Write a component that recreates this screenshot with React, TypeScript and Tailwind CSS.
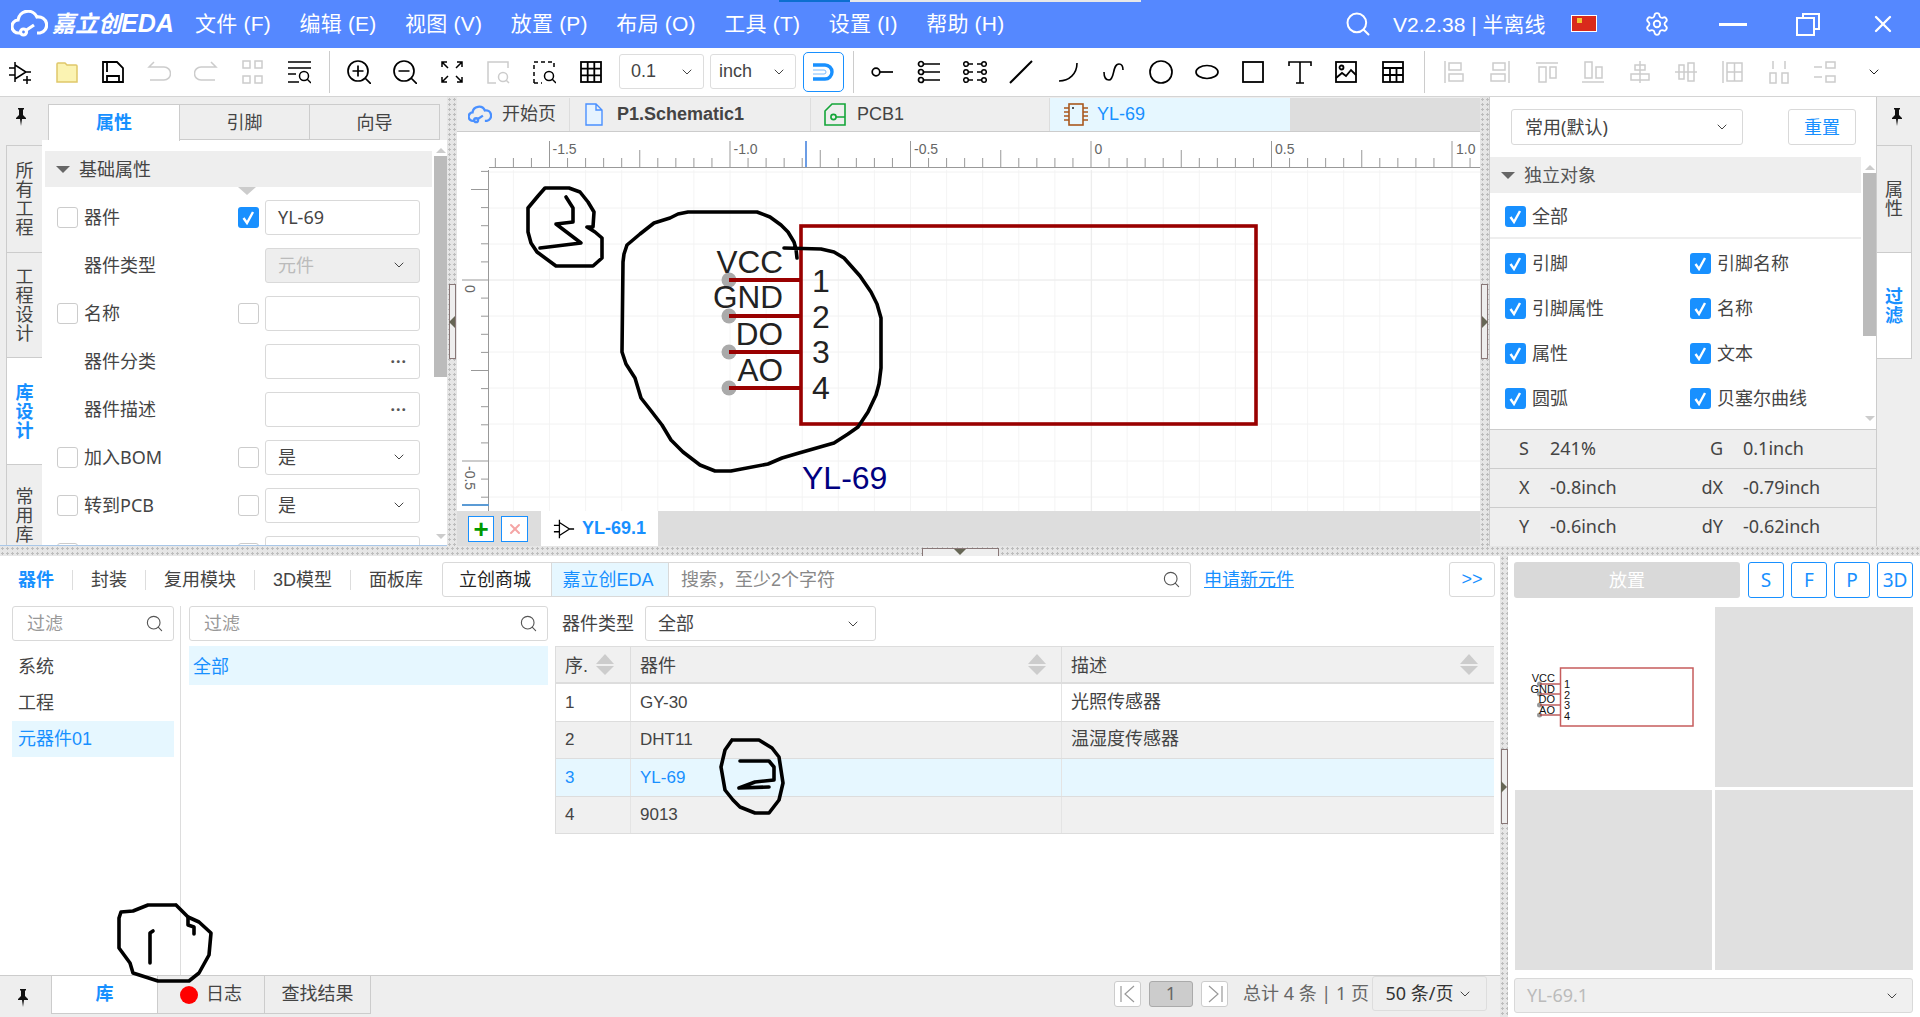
import { ChevronDown, Search, Settings, X } from "lucide-react";
import type { ReactNode } from "react";

const noto = "font-['Noto_Sans','Noto_Sans_CJK_SC',sans-serif]";
const gutter =
  "bg-[#e6e6e6] bg-[radial-gradient(circle,#bdbdbd_1px,transparent_1.2px)] bg-size-[5px_5px]";

function Ico({ children, size = 24, color = "#000", sw = 1.5 }: { children: ReactNode; size?: number; color?: string; sw?: number }) {
  return (
    <svg width={size} height={size} viewBox="0 0 24 24" fill="none" stroke={color} strokeWidth={sw}>
      {children}
    </svg>
  );
}

function Pin() {
  return (
    <svg width="12" height="20" viewBox="0 0 12 20">
      <path d="M3 1h6v1L8 3v5l3 3v1H7l-1 7-1-7H1v-1l3-3V3L3 2z" fill="#111" />
    </svg>
  );
}

function Check({ on }: { on?: boolean }) {
  if (on) {
    return (
      <span className="flex h-[21px] w-[21px] shrink-0 items-center justify-center rounded-[3px] bg-[#1890ff]">
        <svg width="15" height="15" viewBox="0 0 15 15" fill="none" stroke="#fff" strokeWidth="2.4">
          <path d="M2.5 8l3.5 5L12 2" />
        </svg>
      </span>
    );
  }
  return <span className="h-[21px] w-[21px] shrink-0 rounded-[3px] border border-[#ccc] bg-white" />;
}

function Chev({ color = "#444" }: { color?: string }) {
  return <ChevronDown size={16} strokeWidth={1.5} color={color} />;
}

function Tri({ className }: { className: string }) {
  return <span className={`block h-0 w-0 ${className}`} />;
}

const toolLeft: ReactNode[] = [
  <Ico><path d="M7 2v20M7 5l11 7-11 7M1 8h6M1 15h6M18 12h5M15 20h8M19 16v8" /></Ico>,
  <Ico color="#e0c76a"><path d="M2 4a1 1 0 011-1h7l2 2h9a1 1 0 011 1v16H2z" fill="#fbf3b2" /></Ico>,
  <Ico sw={1.8}><path d="M2 2h14l6 6v14H2zM6 2v10M6 22v-6h12v6" /></Ico>,
  <Ico color="#ccc"><path d="M7 2L2 7l5 0M2 7h15a5 5 0 010 13H3" /></Ico>,
  <Ico color="#ccc"><path d="M17 2l5 5-5 0M22 7H7a5 5 0 000 13h14" /></Ico>,
  <Ico color="#ccc"><rect x="3" y="1" width="7" height="7" /><rect x="15" y="1" width="7" height="7" /><rect x="3" y="16" width="7" height="7" /><rect x="15" y="16" width="7" height="7" /></Ico>,
  <Ico><path d="M1 2h23M1 8h23M1 14h8M1 22h11" /><circle cx="17" cy="16" r="4.5" /><path d="M20 19l4 4" /></Ico>,
];

const toolZoom: ReactNode[] = [
  <Ico sw={1.7}><circle cx="11" cy="11" r="10" /><path d="M5.5 11h11M11 5.5v11M18 18l6 6" /></Ico>,
  <Ico sw={1.7}><circle cx="11" cy="11" r="10" /><path d="M5.5 11h11M18 18l6 6" /></Ico>,
  <Ico sw={1.5}><path d="M2 7V2h5M2 2l6 6M22 7V2h-5M22 2l-6 6M2 17v5h5M2 22l6-6M22 17v5h-5M22 22l-6-6" /></Ico>,
  <Ico color="#ccc"><path d="M22 8V2H2v21h8" /><circle cx="17" cy="17" r="4.5" /><path d="M20 20l3 3" /></Ico>,
  <Ico><path d="M2 23V2h20v7" strokeDasharray="4 3" /><path d="M2 23h8" strokeDasharray="4 3" /><circle cx="17" cy="16" r="4.5" /><path d="M20 19l4 4" /></Ico>,
  <Ico sw={1.8}><rect x="2" y="2" width="20" height="20" /><path d="M2 8.7h20M2 15.3h20M8.7 2v20M15.3 2v20" /></Ico>,
];

const toolDraw: ReactNode[] = [
  <Ico sw={1.7}><circle cx="6" cy="12" r="3.8" /><path d="M10 12h13" /></Ico>,
  <Ico sw={1.7}><circle cx="4" cy="4" r="2.5" /><circle cx="4" cy="12" r="2.5" /><circle cx="4" cy="20" r="2.5" /><path d="M7 4h16M7 12h16M7 20h16" /></Ico>,
  <Ico sw={1.5}><circle cx="3" cy="4" r="2.3" /><circle cx="3" cy="12" r="2.3" /><circle cx="3" cy="20" r="2.3" /><circle cx="21" cy="4" r="2.3" /><circle cx="21" cy="12" r="2.3" /><circle cx="21" cy="20" r="2.3" /><path d="M5 4h5M5 12h5M5 20h5M14 4h5M14 12h5M14 20h5" /></Ico>,
  <Ico sw={2}><path d="M1 23L23 1" /></Ico>,
  <Ico sw={1.6}><path d="M3 21c10 0 18-7 18-18" /></Ico>,
  <Ico sw={1.6}><path d="M2 12c0 5 2 8 5 8 6 0 3-16 10-16 3 0 4 3 4 6" /></Ico>,
  <Ico sw={1.7}><circle cx="12" cy="12" r="11" /></Ico>,
  <Ico sw={1.7}><ellipse cx="12" cy="12" rx="11" ry="6.5" /></Ico>,
  <Ico sw={1.8}><rect x="2" y="2" width="20" height="20" /></Ico>,
  <Ico sw={1.6}><path d="M1 6V2h22v4M12 2v21M8 23h8" /></Ico>,
  <Ico sw={1.8}><rect x="2" y="2" width="20" height="20" /><circle cx="7.5" cy="7.5" r="2" /><path d="M2 18l6-5 4 3 5-6 5 5" /></Ico>,
  <Ico sw={1.8}><rect x="2" y="2" width="20" height="20" /><path d="M2 8h20M2 15h20M9 8v14M15.5 8v14" /></Ico>,
];

const toolAlign: ReactNode[] = [
  <><path d="M3 1v22" /><rect x="7" y="3" width="12" height="7" /><rect x="7" y="14" width="14" height="7" /></>,
  <><path d="M21 1v22" /><rect x="5" y="3" width="12" height="7" /><rect x="3" y="14" width="14" height="7" /></>,
  <><path d="M1 3h22" /><rect x="4" y="7" width="7" height="15" /><rect x="15" y="7" width="6" height="11" /></>,
  <><path d="M1 22h22" /><rect x="4" y="2" width="7" height="16" /><rect x="15" y="7" width="6" height="11" /></>,
  <><path d="M12 1v22" /><rect x="7" y="5" width="10" height="5" /><rect x="3" y="14" width="18" height="6" /></>,
  <><path d="M1 12h22" /><rect x="5" y="5" width="5" height="14" /><rect x="14" y="3" width="6" height="18" /></>,
  <><path d="M3 1v22" /><rect x="7" y="3" width="15" height="18" /><path d="M14.5 3v18M7 12h15" /></>,
  <><path d="M6 1v8M18 1v8" /><rect x="3" y="13" width="6" height="10" /><rect x="15" y="13" width="6" height="10" /></>,
  <><path d="M1 7h8M1 17h8" /><rect x="13" y="2" width="9" height="6" /><rect x="13" y="16" width="9" height="6" /></>,
];

function Slot({ children }: { children: ReactNode }) {
  return <div className="flex h-full w-[46.4px] shrink-0 items-center justify-center">{children}</div>;
}

function TitleBar() {
  const menus = ["文件 (F)", "编辑 (E)", "视图 (V)", "放置 (P)", "布局 (O)", "工具 (T)", "设置 (I)", "帮助 (H)"];
  return (
    <div className="relative flex h-12 shrink-0 items-center bg-[#5588ff] text-white">
      <div className="absolute left-[779px] top-0 h-[2px] w-[71px] bg-[#0c6fd0]" />
      <div className="absolute left-[850px] top-0 h-[2px] w-[291px] bg-[#e8e8e8]" />
      <svg className="ml-[11px] shrink-0" width="37" height="28" viewBox="0 0 37 28" fill="none" stroke="#fff" strokeWidth="3.2">
        <path d="M10 23H8a6.5 6.5 0 01-1-13A10 10 0 0126 7a8 8 0 013 16h-3M14 21l9-6" />
        <circle cx="12.5" cy="22" r="3" />
      </svg>
      <span className="ml-[4px] w-[122px] whitespace-nowrap text-[23px] font-bold italic">
        嘉立创<span className="text-[25px]">EDA</span>
      </span>
      <div className="ml-[21px] flex gap-[28.6px] text-[21px] tracking-[0.2px]">
        {menus.map((m) => (
          <span key={m}>{m}</span>
        ))}
      </div>
      <div className="absolute left-[1344px] top-[10px]">
        <Search size={28} strokeWidth={1.7} />
      </div>
      <span className="absolute left-[1393px] top-[9px] text-[21px]">V2.2.38 | 半离线</span>
      <div className="absolute left-[1571px] top-[15px] h-[17px] w-[26px] border border-white bg-[#d92a1c]">
        <span className="absolute left-[5px] top-[2px] h-[5px] w-[5px] bg-[#f3c533]" />
      </div>
      <div className="absolute left-[1644px] top-[11px]">
        <Settings size={26} strokeWidth={1.7} />
      </div>
      <div className="absolute left-[1719px] top-[23px] h-[3px] w-[28px] bg-white" />
      <svg className="absolute left-[1795px] top-[12px]" width="26" height="24" viewBox="0 0 26 24" fill="none" stroke="#fff" strokeWidth="2">
        <path d="M8 6V2h16v15h-5" />
        <rect x="2" y="6" width="17" height="17" />
      </svg>
      <div className="absolute left-[1869px] top-[10px]">
        <X size={28} strokeWidth={2} />
      </div>
    </div>
  );
}

function Toolbar() {
  return (
    <div className="flex h-[49px] shrink-0 items-center border-b border-[#d4d4d4] bg-white pb-px text-[18px] text-[#444]">
      <div className="-ml-[3px] flex h-full">
        {toolLeft.map((t, i) => (
          <Slot key={i}>{t}</Slot>
        ))}
      </div>
      <div className="mx-[7px] h-[42px] w-px shrink-0 bg-[#ccc]" />
      <div className="-ml-px flex h-full">
        {toolZoom.map((t, i) => (
          <Slot key={i}>{t}</Slot>
        ))}
      </div>
      <div className="ml-[5px] flex h-[35px] w-[85px] shrink-0 items-center justify-between rounded-[3px] border border-[#ddd] pl-[11px] pr-[8px]">
        0.1 <Chev />
      </div>
      <div className="ml-[6px] flex h-[35px] w-[86px] shrink-0 items-center justify-between rounded-[3px] border border-[#ddd] pl-[8px] pr-[8px]">
        inch <Chev />
      </div>
      <div className="ml-[7px] flex h-[40px] w-[41px] shrink-0 items-center justify-center rounded-[5px] border border-[#1890ff]">
        <svg width="26" height="22" viewBox="0 0 26 22" fill="none" stroke="#1890ff" strokeWidth="3.4">
          <path d="M2 4h12a7 7 0 010 14H2" />
          <path d="M2 9h11a2 2 0 010 4H2" strokeWidth="1" stroke="#7dbcff" />
        </svg>
      </div>
      <div className="ml-[9px] h-[42px] w-px shrink-0 bg-[#ccc]" />
      <div className="ml-[5px] flex h-full">
        {toolDraw.map((t, i) => (
          <Slot key={i}>{t}</Slot>
        ))}
      </div>
      <div className="ml-[8px] h-[42px] w-px shrink-0 bg-[#ccc]" />
      <div className="ml-[6px] flex h-full">
        {toolAlign.map((t, i) => (
          <Slot key={i}>
            <Ico color="#ccc" sw={1.5}>{t}</Ico>
          </Slot>
        ))}
        <div className="ml-[3px] flex h-full w-[46.4px] items-center justify-center">
          <Chev color="#222" />
        </div>
      </div>
    </div>
  );
}

function RailTab({ text, h, active, side, top }: { text: string; h: number; active?: boolean; side: "l" | "r"; top?: boolean }) {
  const border = side === "l" ? "border-l ml-[6px]" : "border-r mr-[8px]";
  return (
    <div
      className={`flex justify-center overflow-hidden border-t border-[#ccc] ${top ? "items-start pt-[22px]" : "items-center"} ${border} ${active ? "bg-white font-bold text-[#1890ff]" : "text-[#444]"}`}
      style={{ height: h }}
    >
      <span className="block w-[18px] text-[18px] leading-[19px]">{text}</span>
    </div>
  );
}

function Field({ children, disabled }: { children?: ReactNode; disabled?: boolean }) {
  return (
    <div className={`flex h-[35px] w-[155px] shrink-0 items-center justify-between rounded-[3px] border border-[#d9d9d9] pl-[12px] pr-[12px] ${disabled ? "bg-[#eee]" : "bg-white"}`}>
      {children}
    </div>
  );
}

function Dots() {
  return <span className="ml-auto text-[16px] font-bold leading-none tracking-[1px] text-[#555]">···</span>;
}

function PropRow({ label, check, field }: { label: string; check?: "off" | "on"; field: ReactNode }) {
  return (
    <div className="flex h-[48px] items-center pl-[15px]">
      {check ? <Check /> : <span className="w-[21px] shrink-0" />}
      <span className="ml-[6px] w-[154px] shrink-0">{label}</span>
      {check ? <Check on={check === "on"} /> : <span className="w-[21px] shrink-0" />}
      <div className="ml-[6px]">{field}</div>
    </div>
  );
}

function ScrollBar({ top, h }: { top: number; h: number }) {
  return (
    <div className="flex w-[15px] shrink-0 flex-col items-center pl-[2px]">
      <Tri className="mt-[8px] border-x-[5px] border-b-[5px] border-x-transparent border-b-[#ccc]" />
      <div className="w-[13px] bg-[#bbb]" style={{ marginTop: top, height: h }} />
      <span className="flex-1" />
      <Tri className="mb-[6px] border-x-[5px] border-t-[5px] border-x-transparent border-t-[#ccc]" />
    </div>
  );
}

function LeftPanel() {
  return (
    <div className={`flex w-[447px] shrink-0 overflow-hidden border-b border-[#a9c7e8] bg-[#eee] text-[18px] text-[#444] ${noto}`}>
      <div className="flex w-[42px] shrink-0 flex-col">
        <div className="flex h-[48px] items-center justify-center pb-[8px]">
          <Pin />
        </div>
        <RailTab side="l" h={107} text="所有工程" />
        <RailTab side="l" h={106} text="工程设计" />
        <RailTab side="l" h={107} active text="库设计" />
        <RailTab side="l" h={81} top text="常用库" />
      </div>
      <div className="flex min-w-0 flex-1 flex-col">
        <div className="mt-[7px] flex h-[36px] w-[392px] shrink-0 border-x border-t border-[#ccc] ml-[6px] text-center leading-[34px]">
          <div className="relative -mb-px w-[131px] border-r border-[#ccc] bg-white font-bold text-[#1890ff]">属性</div>
          <div className="w-[130px] border-b border-r border-[#ccc]">引脚</div>
          <div className="flex-1 border-b border-[#ccc]">向导</div>
        </div>
        <div className="flex min-h-0 flex-1 bg-white">
          <div className="relative w-[390px] shrink-0 overflow-hidden pt-[11px]">
            <div className="ml-[3px] flex h-[36px] items-center bg-[#eee] pl-[11px]">
              <Tri className="border-x-[7px] border-t-[7px] border-x-transparent border-t-[#666]" />
              <span className="ml-[9px]">基础属性</span>
            </div>
            <Tri className="absolute left-[196px] top-[47px] border-x-[9px] border-t-[8px] border-x-transparent border-t-[#ccc]" />
            <div className="pt-[6px]">
              <PropRow label="器件" check="on" field={<Field>YL-69</Field>} />
              <PropRow label="器件类型" field={<Field disabled><span className="text-[#bbb]">元件</span><Chev /></Field>} />
              <PropRow label="名称" check="off" field={<Field />} />
              <PropRow label="器件分类" field={<Field><Dots /></Field>} />
              <PropRow label="器件描述" field={<Field><Dots /></Field>} />
              <PropRow label="加入BOM" check="off" field={<Field>是<Chev /></Field>} />
              <PropRow label="转到PCB" check="off" field={<Field>是<Chev /></Field>} />
              <PropRow label="" check="off" field={<Field />} />
            </div>
          </div>
          <ScrollBar top={3} h={221} />
        </div>
      </div>
    </div>
  );
}

function Handle({ dir }: { dir: "l" | "r" }) {
  return (
    <div className="flex h-[75px] w-[7px] items-center justify-center border border-[#877] bg-[#eee]">
      {dir === "l" ? (
        <Tri className="border-y-[6px] border-r-[6px] border-y-transparent border-r-[#665]" />
      ) : (
        <Tri className="border-y-[6px] border-l-[6px] border-y-transparent border-l-[#665]" />
      )}
    </div>
  );
}

function SchematicCanvas() {
  const minorX = Array.from({ length: 56 }, (_, i) => 495.35 + i * 18.05);
  const gridX = Array.from({ length: 28 }, (_, i) => 513.4 + i * 36.1);
  const gridY = [172, 208, 244, 280, 316, 352, 388, 424, 461, 497];
  const minorY = Array.from({ length: 19 }, (_, i) => 280 + (i - 6) * 18.1);
  const labels: [number, string][] = [[549.5, "-1.5"], [730.5, "-1.0"], [911, "-0.5"], [1091.6, "0"], [1272, "0.5"], [1453, "1.0"]];
  const pins = [
    { y: 280, name: "VCC", ny: 273, num: "1", dy: 292 },
    { y: 316, name: "GND", ny: 308, num: "2", dy: 328 },
    { y: 352, name: "DO", ny: 345, num: "3", dy: 363 },
    { y: 388, name: "AO", ny: 381, num: "4", dy: 399 },
  ];
  return (
    <svg width="1023" height="379" viewBox="457 132 1023 379" className="block shrink-0 bg-white" fontFamily="'Liberation Sans', sans-serif">
      {gridX.map((x) => (
        <line key={x} x1={x} x2={x} y1={170} y2={511} stroke="#f4f4f4" />
      ))}
      {gridY.map((y) => (
        <line key={y} x1={489} x2={1480} y1={y} y2={y} stroke="#f2f2f2" />
      ))}
      <line x1={1091.6} x2={1091.6} y1={170} y2={511} stroke="#ececec" />
      <line x1={489} x2={1480} y1={280} y2={280} stroke="#ececec" />
      <line x1={489} x2={1480} y1={167.5} y2={167.5} stroke="#999" />
      <line x1={488.5} x2={488.5} y1={170} y2={511} stroke="#999" />
      {minorX.map((x, i) => {
        const k = i - 3;
        const tall = k % 10 === 0;
        const mid = k % 5 === 0;
        return <line key={x} x1={x} x2={x} y1={tall ? 141 : mid ? 150 : 158} y2={167} stroke="#999" />;
      })}
      {labels.map(([x, t]) => (
        <text key={t} x={x + 3} y={154} fontSize={14} fill="#666">{t}</text>
      ))}
      <line x1={806} x2={806} y1={141} y2={167} stroke="#3b7ddd" strokeWidth={1.5} />
      {minorY.map((y, i) => {
        const k = i - 6;
        const tall = k % 10 === 0;
        const mid = k % 5 === 0;
        return <line key={y} y1={y} y2={y} x1={tall ? 462 : mid ? 471 : 481} x2={489} stroke="#999" />;
      })}
      <text transform="translate(465 285) rotate(90)" fontSize={14} fill="#666">0</text>
      <text transform="translate(465 466) rotate(90)" fontSize={14} fill="#666">-0.5</text>
      <line x1={462} x2={489} y1={505} y2={505} stroke="#5b9bd5" strokeWidth={2} />
      {pins.map((p) => (
        <g key={p.num}>
          <circle cx={729} cy={p.y} r={7.5} fill="#aaa" />
          <line x1={729} x2={801} y1={p.y} y2={p.y} stroke="#990000" strokeWidth={4} />
          <text x={783} y={p.ny} fontSize={31.5} textAnchor="end" fill="#222">{p.name}</text>
          <text x={812} y={p.dy} fontSize={32} fill="#222">{p.num}</text>
        </g>
      ))}
      <rect x={801} y={226} width={455} height={198} fill="none" stroke="#990000" strokeWidth={3.6} />
      <text x={802} y={489} fontSize={32} fill="#000080">YL-69</text>
    </svg>
  );
}

function CenterPanel() {
  return (
    <div className="flex w-[1023px] shrink-0 flex-col bg-[#ddd] text-[18px]">
      <div className="flex h-[35px] shrink-0 border-b border-[#ccc] bg-[#eee] pt-px text-[#444]">
        <div className="flex w-[113px] items-center gap-[10px] border-r border-[#ddd] pl-[11px]">
          <svg width="24" height="22" viewBox="0 0 37 28" fill="none" stroke="#4a90ff" strokeWidth="3.6">
            <path d="M10 23H8a6.5 6.5 0 01-1-13A10 10 0 0126 7a8 8 0 013 16h-3M14 21l9-6" />
            <circle cx="12.5" cy="22" r="3" />
          </svg>
          开始页
        </div>
        <div className="flex w-[241px] items-center gap-[14px] border-r border-[#ddd] pl-[15px] font-bold">
          <svg width="18" height="23" viewBox="0 0 18 23" fill="#e6f3ff" stroke="#4a90ff" strokeWidth="1.4">
            <path d="M1 1h10l6 6v15H1zM11 1v6h6" />
          </svg>
          P1.Schematic1
        </div>
        <div className="flex w-[239px] items-center gap-[11px] border-r border-[#ddd] pl-[13px]">
          <svg width="22" height="23" viewBox="0 0 22 23" fill="none" stroke="#13a538" strokeWidth="1.6">
            <path d="M1 8l7-7h13v21H1zM21 14h-9" />
            <circle cx="9.5" cy="14" r="2.6" />
          </svg>
          PCB1
        </div>
        <div className="flex w-[240px] items-center gap-[9px] bg-[#e6f7ff] pl-[14px] text-[#1890ff]">
          <svg width="24" height="23" viewBox="0 0 24 23" fill="none" stroke="#a9581f" strokeWidth="1.6">
            <rect x="5" y="1" width="14" height="21" />
            <path d="M0 5h5M0 9h5M0 13h5M0 17h5M19 5h5M19 9h5M19 13h5M19 17h5" />
            <circle cx="9" cy="5" r="1" fill="#222" stroke="none" />
          </svg>
          YL-69
        </div>
        <div className="flex-1 bg-[#ddd]" />
      </div>
      <SchematicCanvas />
      <div className="flex flex-1 items-center pl-[11px]">
        <div className="flex h-[26px] w-[26px] items-center justify-center border border-[#1890ff] bg-white text-[26px] font-bold leading-none text-[#090]">+</div>
        <div className="ml-[7px] flex h-[26px] w-[27px] items-center justify-center border border-[#1890ff] bg-white">
          <X size={16} strokeWidth={3} color="#f5a5a5" />
        </div>
        <div className="ml-[13px] flex h-[35px] w-[117px] items-center gap-[7px] self-end bg-white pl-[12px] font-bold text-[#1890ff]">
          <Ico size={22} sw={1.4}>
            <path d="M7 2v20M7 5l11 7-11 7M1 8h6M1 15h6M18 12h5" />
          </Ico>
          YL-69.1
        </div>
      </div>
    </div>
  );
}

function RightPanel() {
  const filters: [string, string?][] = [["引脚", "引脚名称"], ["引脚属性", "名称"], ["属性", "文本"], ["圆弧", "贝塞尔曲线"]];
  const stats = [
    ["S", "241%", "G", "0.1inch"],
    ["X", "-0.8inch", "dX", "-0.79inch"],
    ["Y", "-0.6inch", "dY", "-0.62inch"],
  ];
  return (
    <div className={`flex min-w-0 flex-1 bg-[#eee] text-[18px] text-[#444] ${noto}`}>
      <div className="flex w-[388px] shrink-0 flex-col border-x border-[#ccc] bg-white">
        <div className="flex h-[60px] shrink-0 items-center pl-[21px]">
          <div className="flex h-[36px] w-[232px] items-center justify-between rounded-[3px] border border-[#d9d9d9] pl-[13px] pr-[12px]">
            常用(默认)
            <Chev />
          </div>
          <div className="ml-[45px] flex h-[36px] w-[68px] items-center justify-center rounded-[3px] border border-[#d9d9d9] text-[#1890ff]">重置</div>
        </div>
        <div className="flex min-h-0 flex-1">
          <div className="w-[371px] shrink-0">
            <div className="flex h-[36px] items-center bg-[#eee] pl-[11px] text-[#555]">
              <Tri className="border-x-[7px] border-t-[7px] border-x-transparent border-t-[#666]" />
              <span className="ml-[9px]">独立对象</span>
            </div>
            <div className="flex h-[46px] items-center gap-[6px] border-b-2 border-[#eee] pl-[15px] pt-[2px]">
              <Check on />
              全部
            </div>
            <div className="pt-[2px]">
              {filters.map(([a, b]) => (
                <div key={a} className="flex h-[45px] items-center pl-[15px]">
                  <Check on />
                  <span className="ml-[6px] w-[158px]">{a}</span>
                  <Check on />
                  <span className="ml-[6px]">{b}</span>
                </div>
              ))}
            </div>
          </div>
          <div className="flex w-[15px] flex-col items-center pl-[2px]">
            <Tri className="mt-[8px] border-x-[5px] border-b-[5px] border-x-transparent border-b-[#ccc]" />
            <div className="mt-[3px] h-[163px] w-[13px] bg-[#bbb]" />
            <span className="flex-1" />
            <Tri className="mb-[8px] border-x-[5px] border-t-[5px] border-x-transparent border-t-[#ccc]" />
          </div>
        </div>
        <div className="shrink-0 bg-[#eee]">
          {stats.map((r) => (
            <div key={r[0]} className="flex h-[39px] items-center border-t border-[#ccc] pb-[2px]">
              <span className="ml-[29px] w-[31px]">{r[0]}</span>
              <span className="w-[120px]">{r[1]}</span>
              <span className="w-[53px] text-right">{r[2]}</span>
              <span className="ml-[20px]">{r[3]}</span>
            </div>
          ))}
        </div>
      </div>
      <div className="flex min-w-0 flex-1 flex-col">
        <div className="flex h-[48px] items-center justify-center pb-[8px] pr-[3px]">
          <Pin />
        </div>
        <RailTab side="r" h={107} text="属性" />
        <div className="mr-[8px] flex h-[107px] items-center justify-center border-y border-r border-[#ccc] bg-white font-bold text-[#1890ff]">
          <span className="block w-[18px] leading-[19px]">过滤</span>
        </div>
      </div>
    </div>
  );
}

function FilterBox({ w, text }: { w: string; text: string }) {
  return (
    <div className={`flex h-[35px] items-center justify-between rounded-[3px] border border-[#d9d9d9] pl-[14px] pr-[9px] text-[#999] ${w}`}>
      <span className="pt-[2px]">{text}</span>
      <Search size={19} strokeWidth={1.4} color="#555" />
    </div>
  );
}

function SortArrows() {
  return (
    <span className="flex flex-col gap-[2px]">
      <Tri className="border-x-[9px] border-b-[10px] border-x-transparent border-b-[#ccc]" />
      <Tri className="border-x-[9px] border-t-[9px] border-x-transparent border-t-[#ccc]" />
    </span>
  );
}

function LibraryTable() {
  const rows = [
    { n: "1", name: "GY-30", desc: "光照传感器", bg: "bg-white" },
    { n: "2", name: "DHT11", desc: "温湿度传感器", bg: "bg-[#f0f0f0]" },
    { n: "3", name: "YL-69", desc: "", bg: "bg-[#e6f7ff] text-[#1890ff]" },
    { n: "4", name: "9013", desc: "", bg: "bg-[#f0f0f0]" },
  ];
  return (
    <div className="mt-[5px] border-l border-t border-[#ddd] text-[#444]">
      <div className="flex h-[37px] border-b-2 border-[#ddd] bg-[#f0f0f0] text-[18px]">
        <div className="flex w-[75px] items-center justify-between border-r border-[#ddd] pl-[9px] pr-[16px]"><span className="pt-[3px]">序.</span><SortArrows /></div>
        <div className="flex w-[431px] items-center justify-between border-r border-[#ddd] pl-[9px] pr-[15px]"><span className="pt-[3px]">器件</span><SortArrows /></div>
        <div className="flex flex-1 items-center justify-between pl-[9px] pr-[16px]"><span className="pt-[3px]">描述</span><SortArrows /></div>
      </div>
      {rows.map((r) => (
        <div key={r.n} className={`flex h-[37.5px] border-b border-[#ddd] text-[17px] ${r.bg}`}>
          <div className="flex w-[75px] items-center border-r border-[#e4e4e4] pl-[9px]">{r.n}</div>
          <div className="flex w-[431px] items-center border-r border-[#e4e4e4] pl-[9px]">{r.name}</div>
          <div className="flex flex-1 items-center pl-[9px] text-[18px]">{r.desc}</div>
        </div>
      ))}
    </div>
  );
}

function LibraryPanel() {
  const tabs = ["封装", "复用模块", "3D模型"];
  return (
    <div className="flex w-[1500px] shrink-0 flex-col bg-white text-[18px] text-[#444]">
      <div className="flex h-[50px] shrink-0 items-start pt-[6px]">
        <div className="flex h-[35px] items-center pl-[18px] pt-px">
          <span className="mr-[18px] border-r border-[#ddd] pr-[18px] font-bold leading-[20px] text-[#1890ff]">器件</span>
          {tabs.map((t) => (
            <span key={t} className="mr-[18px] border-r border-[#ddd] pr-[18px] leading-[20px]">{t}</span>
          ))}
          <span>面板库</span>
        </div>
        <div className="ml-[19px] flex h-[35px] w-[749px] items-center rounded-[3px] border border-[#d9d9d9]">
          <div className="flex h-full w-[109px] items-center justify-center border-r border-[#d9d9d9] pr-[4px] pt-px text-[#222]">立创商城</div>
          <div className="flex h-full w-[117px] items-center justify-center border-r border-[#d9d9d9] bg-[#e6f7ff] pr-[4px] pt-px text-[#1890ff]">嘉立创EDA</div>
          <div className="flex flex-1 items-center justify-between pl-[12px] pr-[9px] text-[#888]">
            <span className="pt-px">搜索，至少2个字符</span>
            <Search size={19} strokeWidth={1.4} color="#555" />
          </div>
        </div>
        <a className="ml-[13px] flex h-[35px] items-center pt-px text-[#1890ff] underline">申请新元件</a>
        <div className="ml-auto mr-[5px] flex h-[35px] w-[46px] items-center justify-center rounded-[3px] border border-[#d9d9d9] text-[18px] text-[#1890ff]">
          &gt;&gt;
        </div>
      </div>
      <div className="flex min-h-0 flex-1 pl-[12px]">
        <div className="w-[162px] shrink-0">
          <FilterBox w="w-full" text="过滤" />
          <div className="mt-[6px] pl-[6px]">
            <div className="flex h-[37px] items-center pt-[3px]">系统</div>
            <div className="flex h-[37px] items-center pt-[2px]">工程</div>
          </div>
          <div className="flex h-[36px] items-center bg-[#e6f7ff] pl-[6px] text-[#1890ff]">元器件01</div>
        </div>
        <div className="ml-[6px] w-px bg-[#ddd]" />
        <div className="ml-[8px] w-[359px] shrink-0">
          <FilterBox w="w-full" text="过滤" />
          <div className="mt-[5px] flex h-[39px] items-center bg-[#e6f7ff] pl-[4px] pt-[3px] text-[#1890ff]">全部</div>
        </div>
        <div className="ml-[7px] w-[939px] shrink-0">
          <div className="flex h-[35px] items-center">
            <span className="ml-[7px] pt-px">器件类型</span>
            <div className="ml-[11px] flex h-[35px] w-[231px] items-center justify-between rounded-[3px] border border-[#d9d9d9] pl-[12px] pr-[14px]">
              <span className="pt-[2px]">全部</span>
              <Chev />
            </div>
          </div>
          <LibraryTable />
        </div>
      </div>
      <div className="flex h-[42px] shrink-0 items-start border-t border-[#ccc] bg-[#eee]">
        <div className="flex h-[38px] w-[51px] items-center justify-center pr-[6px] pt-[5px]">
          <Pin />
        </div>
        <div className="flex h-[38px] w-[107px] items-center justify-center border-x border-b border-[#ccc] bg-white font-bold text-[#1890ff]">库</div>
        <div className="flex h-[38px] w-[107px] items-center justify-center gap-[8px] border-b border-r border-[#ccc]">
          <span className="h-[18px] w-[18px] rounded-full bg-[#f00]" />
          日志
        </div>
        <div className="flex h-[38px] w-[106px] items-center justify-center border-b border-r border-[#ccc]">查找结果</div>
        <div className={`ml-auto flex items-center pr-[13px] ${noto}`}>
          <div className="flex h-[26px] w-[27px] items-center justify-center rounded-[3px] border border-[#ccc] bg-white">
            <svg width="18" height="18" viewBox="0 0 18 18" fill="none" stroke="#999" strokeWidth="1.2"><path d="M2 1v16M15 1L6 9l9 8" /></svg>
          </div>
          <div className="ml-[8px] flex h-[26px] w-[44px] items-center justify-center rounded-[3px] border border-[#aaa] bg-[#ccc] text-[#666]">1</div>
          <div className="ml-[8px] flex h-[26px] w-[27px] items-center justify-center rounded-[3px] border border-[#ccc] bg-white">
            <svg width="18" height="18" viewBox="0 0 18 18" fill="none" stroke="#999" strokeWidth="1.2"><path d="M16 1v16M3 1l9 8-9 8" /></svg>
          </div>
          <span className="ml-[15px] w-[129px] whitespace-nowrap text-[#666]">总计 4 条 | 1 页</span>
          <div className="flex h-[35px] w-[115px] items-center justify-center gap-[4px] rounded-[3px] border border-[#ddd] text-[#333]">
            50 条/页
            <Chev />
          </div>
        </div>
      </div>
    </div>
  );
}

function MiniPreview() {
  const pins = [
    { y: 684, name: "VCC", ny: 682, num: "1", dy: 688 },
    { y: 694, name: "GND", ny: 693, num: "2", dy: 699 },
    { y: 705, name: "DO", ny: 703, num: "3", dy: 709 },
    { y: 715, name: "AO", ny: 714, num: "4", dy: 720 },
  ];
  return (
    <svg width="197" height="180" viewBox="1515 607 197 180" className="block bg-white" fontFamily="'Liberation Sans', sans-serif">
      {pins.map((p) => (
        <g key={p.num}>
          <circle cx={1539.5} cy={p.y} r={2.5} fill="#999" />
          <line x1={1540} x2={1560} y1={p.y} y2={p.y} stroke="#a33" strokeWidth={1.2} />
          <text x={1555} y={p.ny} fontSize={11} textAnchor="end" fill="#111">{p.name}</text>
          <text x={1564} y={p.dy} fontSize={11} fill="#111">{p.num}</text>
        </g>
      ))}
      <rect x={1560.5} y={668} width={132.5} height={58} fill="none" stroke="#c65c5c" strokeWidth={1.5} />
    </svg>
  );
}

function PreviewPanel() {
  return (
    <div className={`flex min-w-0 flex-1 flex-col bg-white pl-[6px] pt-[6px] ${noto}`}>
      <div className="flex h-[36px] items-stretch">
        <div className="flex w-[226px] items-center justify-center rounded-[3px] bg-[#d9d9d9] text-[18px] text-white">放置</div>
        {["S", "F", "P", "3D"].map((t, i) => (
          <div
            key={t}
            className={`flex w-[36px] items-center justify-center rounded-[3px] border border-[#1890ff] text-[19px] text-[#1890ff] ${i === 0 ? "ml-[8px]" : "ml-[7px]"}`}
          >
            {t}
          </div>
        ))}
      </div>
      <div className="mt-[9px] ml-px grid w-[398px] grid-cols-[197px_198px] grid-rows-[180px_180px] gap-[3px]">
        <MiniPreview />
        <div className="bg-[#e0e0e0]" />
        <div className="bg-[#e0e0e0]" />
        <div className="bg-[#e0e0e0]" />
      </div>
      <div className="mt-[8px] flex h-[35px] w-[399px] items-center justify-between rounded-[3px] border border-[#d9d9d9] bg-[#f0f0f0] pl-[12px] pr-[12px] text-[18px] text-[#bbb]">
        YL-69.1
        <Chev />
      </div>
    </div>
  );
}

function InkMarks() {
  const lines = [
    "797,258 796,249 794,242 788,232 781,225 770,217 757,212 688,212 678,214 670,218 654,223 640,234 627,245 624,254 623,262 622,352 626,364 635,378 641,398 652,412 662,425 671,440 683,452 700,465 715,471 731,471 768,464 782,458 799,453 834,443 848,434 858,427 868,412 876,395 879,384 881,368 881,318 877,304 871,292 860,276 844,258 834,252 821,249 784,248",
    "569,188 545,188 538,196 528,208 528,232 531,243 537,252 556,266 593,266 602,258 602,238 595,232 587,227 593,227 594,212 588,202 580,192 569,188",
    "566,197 573,208 573,222 556,224 581,243 540,248",
    "732,740 759,740 772,748 779,757 783,783 779,800 769,813 755,813 740,807 733,800 725,790 721,767 725,750 732,740",
    "740,761 769,761 774,767 774,780 755,782 739,788 769,787",
    "176,905 148,905 133,911 121,912 119,918 119,948 130,963 133,973 158,981 189,981 199,973 209,955 211,933 199,922 188,917 176,905",
    "188,917 188,925 194,927 194,934",
    "153,931 150,933 150,963",
  ];
  return (
    <svg className="pointer-events-none absolute inset-0" width="1920" height="1017" viewBox="0 0 1920 1017" fill="none" stroke="#000" strokeWidth="3.6" strokeLinejoin="round" strokeLinecap="round">
      {lines.map((p) => (
        <polyline key={p} points={p} />
      ))}
    </svg>
  );
}

export default function App() {
  return (
    <div className="relative flex h-[1017px] w-[1920px] flex-col overflow-hidden bg-white font-['Liberation_Sans','Noto_Sans_CJK_SC',sans-serif]">
      <TitleBar />
      <Toolbar />
      <div className="flex h-[449px] shrink-0">
        <LeftPanel />
        <div className={`flex w-[10px] shrink-0 items-center justify-center ${gutter}`}>
          <Handle dir="l" />
        </div>
        <CenterPanel />
        <div className={`flex w-[9px] shrink-0 items-center justify-center ${gutter}`}>
          <Handle dir="r" />
        </div>
        <RightPanel />
      </div>
      <div className={`flex h-[10px] shrink-0 justify-center ${gutter}`}>
        <div className="mt-[2px] flex h-[8px] w-[77px] justify-center border border-b-0 border-[#877] bg-[#eee]">
          <Tri className="border-x-[6px] border-t-[6px] border-x-transparent border-t-[#665]" />
        </div>
      </div>
      <div className="flex min-h-0 flex-1">
        <LibraryPanel />
        <div className={`flex w-[8px] shrink-0 items-center justify-center ${gutter}`}>
          <Handle dir="r" />
        </div>
        <PreviewPanel />
      </div>
      <InkMarks />
    </div>
  );
}
